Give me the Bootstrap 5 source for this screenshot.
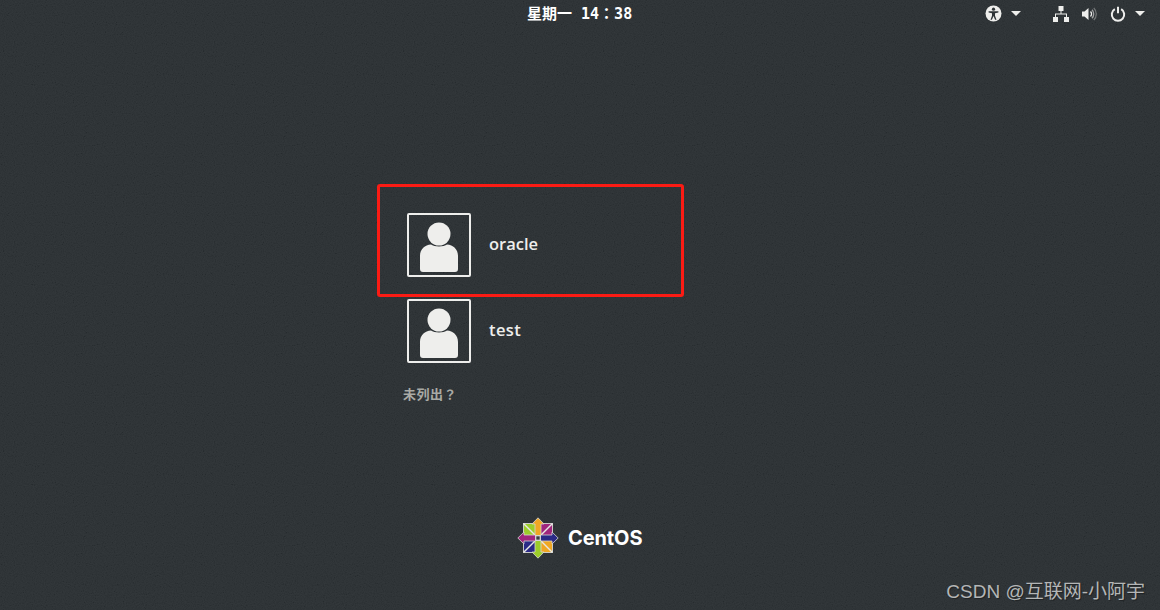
<!DOCTYPE html>
<html lang="zh">
<head>
<meta charset="utf-8">
<title>CentOS login</title>
<link href="https://cdn.jsdelivr.net/npm/bootstrap@5.3.0/dist/css/bootstrap.min.css" rel="stylesheet">
<style>
html,body{height:610px;overflow:hidden}
body{background-color:#282d30;background-image:url("data:image/svg+xml,%3Csvg xmlns='http://www.w3.org/2000/svg' width='200' height='200'%3E%3Cfilter id='n'%3E%3CfeTurbulence type='fractalNoise' baseFrequency='.9' numOctaves='2' stitchTiles='stitch'/%3E%3CfeColorMatrix values='1.6 0 0 0 -.3 1.6 0 0 0 -.3 1.6 0 0 0 -.3 0 0 0 0 .05'/%3E%3C/filter%3E%3Crect width='200' height='200' filter='url(%23n)'/%3E%3C/svg%3E");font-family:"Open Sans","Noto Sans","Noto Sans CJK SC",sans-serif;color:#eeeeec;position:relative}
.top-strip{height:27px;position:relative}
.clock{font:700 15px/26px "DejaVu Sans Mono","Noto Sans CJK SC",monospace;color:#fff;padding-left:527px}
.wide-punct{font-family:"Noto Sans CJK TC",sans-serif}
.tray{position:absolute;top:0;right:0;height:27px}
.tray svg{display:block}
.caret-mark{width:0;height:0;border-left:5px solid transparent;border-right:5px solid transparent;border-top:5px solid #eeeeec}
.gap-a{margin-right:9px}
.gap-b{margin-right:32px}
.gap-c{margin-right:12px}
.gap-d{margin-right:13px}
.gap-e{margin-right:15px}
.login-col{margin-left:377px;margin-top:157px;width:307px}
.red-frame{border:3px solid #fb1b14;border-radius:3px;height:113px;padding:26px 0 0 27px}
.person-row{gap:18px;height:64px}
.person-row.second{margin-left:30px;margin-top:2px}
.face{width:64px;height:64px;border:2px solid #eeeeec;border-radius:2px;flex:none}
.uname{font-size:16.5px;font-weight:600;color:#eeeeec;line-height:18px;margin-bottom:2px}
.second .uname{letter-spacing:.4px}
.not-listed{font:700 13px/16px "Noto Sans CJK SC",sans-serif;color:#a9aaa5;margin:23px 0 0 26px;letter-spacing:.5px}
.brand{position:absolute;top:517px;left:517px;gap:9px}
.brand-word{font:700 20px/24px "Inter",sans-serif;color:#fff;letter-spacing:-.1px}
.mark-text{position:absolute;right:15px;bottom:6px;font:19px/24px "Liberation Sans","Noto Sans CJK SC",sans-serif;color:#b4b6b6;text-shadow:1px 1px 1px rgba(0,0,0,.35)}
</style>
</head>
<body>
<div class="top-strip">
  <div class="clock">星期一 14<span class="wide-punct" lang="zh-TW">：</span>38</div>
  <div class="tray d-flex align-items-center">
    <svg class="gap-a" width="17" height="17" viewBox="0 0 17 17"><circle cx="8.5" cy="8.5" r="8" fill="#eeeeec"/><g fill="#2e3336"><circle cx="8.5" cy="4.2" r="1.6"/><path d="M3.6 6.2h9.8v1.3l-3.4.8v2.4l1.5 4h-1.4l-1.6-3.7-1.6 3.7H5.500l1.500-4V8.300l-3.400-.8z"/></g></svg>
    <div class="caret-mark gap-b"></div>
    <svg width="16" height="16" viewBox="0 0 16 16" class="gap-c"><g fill="#eeeeec"><rect x="5.500" y="0" width="5" height="5"/><rect x="0" y="11" width="5" height="5"/><rect x="11" y="11" width="5" height="5"/><path d="M7.500 5h1v2.500h5.500V11h-1V8.500H3V11H2V7.500h5.500z"/></g></svg>
    <svg width="16" height="16" viewBox="0 0 16 16" class="gap-d"><path d="M1 5.500h2.500L7.500 2v12l-4-3.500H1z" fill="#eeeeec"/><g fill="none" stroke="#eeeeec" stroke-width="1.300"><path d="M9.500 5.500a3.500 3.500 0 0 1 0 5"/><path d="M11 3.800a6 6 0 0 1 0 8.400" opacity=".6"/><path d="M12.800 2a8.500 8.500 0 0 1 0 12" opacity=".35"/></g></svg>
    <svg width="16" height="16" viewBox="0 0 16 16" class="gap-a"><g fill="none" stroke="#eeeeec" stroke-width="2"><path d="M4.800 3.200a6.200 6.200 0 1 0 6.400 0"/><path d="M8 .800v6.500"/></g></svg>
    <div class="caret-mark gap-e"></div>
  </div>
</div>
<div class="login-col">
  <div class="red-frame">
    <div class="person-row d-flex align-items-center">
      <div class="face"><svg width="60" height="60" viewBox="0 0 60 60"><g fill="#eeeeec"><circle cx="30" cy="19" r="11.500"/><path d="M11 54V41c0-7 5-11 11-11.500 3 2.500 13 2.500 16 0 6 .500 11 4.500 11 11.500v13c0 2-1 3-3 3H14c-2 0-3-1-3-3z"/></g></svg></div>
      <div class="uname">oracle</div>
    </div>
  </div>
  <div class="person-row second d-flex align-items-center">
    <div class="face"><svg width="60" height="60" viewBox="0 0 60 60"><g fill="#eeeeec"><circle cx="30" cy="19" r="11.500"/><path d="M11 54V41c0-7 5-11 11-11.500 3 2.500 13 2.500 16 0 6 .500 11 4.500 11 11.500v13c0 2-1 3-3 3H14c-2 0-3-1-3-3z"/></g></svg></div>
    <div class="uname">test</div>
  </div>
  <div class="not-listed">未列出<span class="wide-punct" lang="zh-TW">？</span></div>
</div>
<div class="brand d-flex align-items-center">
  <svg width="42" height="42" viewBox="0 0 42 42">
    <defs>
      <g id="arm">
        <path d="M21 .8l6 6.200H24v11.500h-6V7h-3z" stroke="#d8d8d4" stroke-width=".8"/>
      </g>
      <g id="quad">
        <rect x="6.500" y="6.500" width="12.500" height="12.500" stroke="#d8d8d4" stroke-width=".9"/>
        <path d="M6.500 6.500l12.500 12.500" stroke="#e8e8e4" stroke-width="1.400"/>
      </g>
    </defs>
    <use href="#quad" fill="#9ccd2a"/>
    <use href="#quad" fill="#a0267d" transform="rotate(90 21 21)"/>
    <use href="#quad" fill="#efa724" transform="rotate(180 21 21)"/>
    <use href="#quad" fill="#2b2a86" transform="rotate(270 21 21)"/>
    <use href="#arm" fill="#efa724"/>
    <use href="#arm" fill="#2b2a86" transform="rotate(90 21 21)"/>
    <use href="#arm" fill="#9ccd2a" transform="rotate(180 21 21)"/>
    <use href="#arm" fill="#a0267d" transform="rotate(270 21 21)"/>
    <rect x="18.800" y="18.800" width="4.400" height="4.400" fill="#3a3f42" stroke="#e8e8e4"/>
  </svg>
  <div class="brand-word">CentOS</div>
</div>
<div class="mark-text">CSDN @互联网-小阿宇</div>
</body>
</html>
